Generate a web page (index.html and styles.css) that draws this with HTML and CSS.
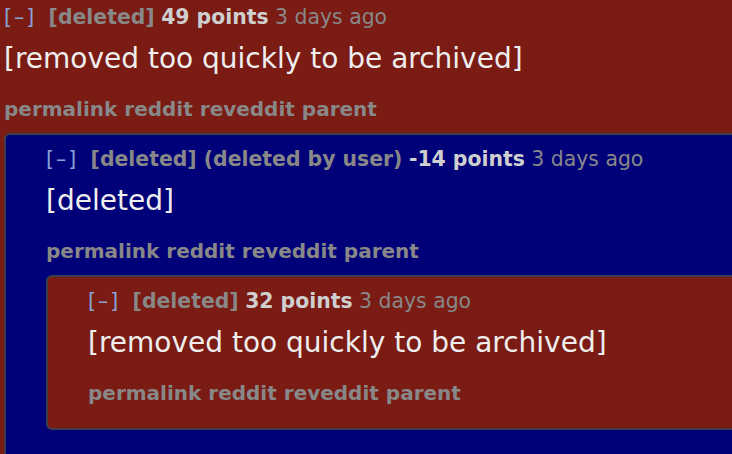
FILE: index.html
```html
<!DOCTYPE html>
<html lang="en">
<head>
    <meta charset="UTF-8">
    <meta name="viewport" content="width=device-width, initial-scale=1.0">
    <title>reveddit thread</title>
    <link rel="stylesheet" href="styles.css">
</head>
<body>

<div class="thread">
    <div class="comment red top">
        <div class="tagline">
            <span class="expand">[&ndash;]</span>
            <span class="author">[deleted]</span>
            <span class="score">49 points</span>
            <span class="time">3 days ago</span>
        </div>
        <div class="body">[removed too quickly to be archived]</div>
        <div class="buttons"><a>permalink</a> <a>reddit</a> <a>reveddit</a> <a>parent</a></div>

        <div class="comment blue">
            <div class="tagline">
                <span class="expand">[&ndash;]</span>
                <span class="author">[deleted] (deleted by user)</span>
                <span class="score">-14 points</span>
                <span class="time">3 days ago</span>
            </div>
            <div class="body">[deleted]</div>
            <div class="buttons"><a>permalink</a> <a>reddit</a> <a>reveddit</a> <a>parent</a></div>

            <div class="comment red">
                <div class="tagline">
                    <span class="expand">[&ndash;]</span>
                    <span class="author">[deleted]</span>
                    <span class="score">32 points</span>
                    <span class="time">3 days ago</span>
                </div>
                <div class="body">[removed too quickly to be archived]</div>
                <div class="buttons"><a>permalink</a> <a>reddit</a> <a>reveddit</a> <a>parent</a></div>
            </div>
        </div>
    </div>
</div>

</body>
</html>
```
FILE: styles.css
```css
body{
    margin:0;
    background-color:#7a1b14;
    font-family:'DejaVu Sans', Verdana, sans-serif;
    overflow:hidden;
}
.thread{
    width:1000px;
    margin-top:-7px;
}
.comment{
    border:solid 2px #3b3f4c;
    border-radius:6px;
    padding:11px 0 11px 40px;
}
.comment.top{
    border:0;
    padding-left:4px;
}
.red{
    background-color:#7a1b14;
}
.blue{
    background-color:#000078;
    padding-bottom:60px;
}
.tagline{
    font-size:20.4px;
    line-height:26px;
    white-space:nowrap;
}
.expand{
    color:#8ba3d4;
    letter-spacing:2px;
    margin-right:6px;
}
.author{
    color:#888;
    font-weight:700;
}
.score{
    color:#cfcfcf;
    font-weight:700;
}
.time{
    color:#888;
}
.body{
    margin-top:12px;
    font-size:28px;
    line-height:34px;
    color:#eee;
    white-space:nowrap;
}
.buttons{
    margin-top:20px;
    margin-bottom:11px;
    font-size:20px;
    line-height:26px;
    font-weight:700;
    color:#888;
    white-space:nowrap;
}
.buttons a{
    color:#888;
}
```
